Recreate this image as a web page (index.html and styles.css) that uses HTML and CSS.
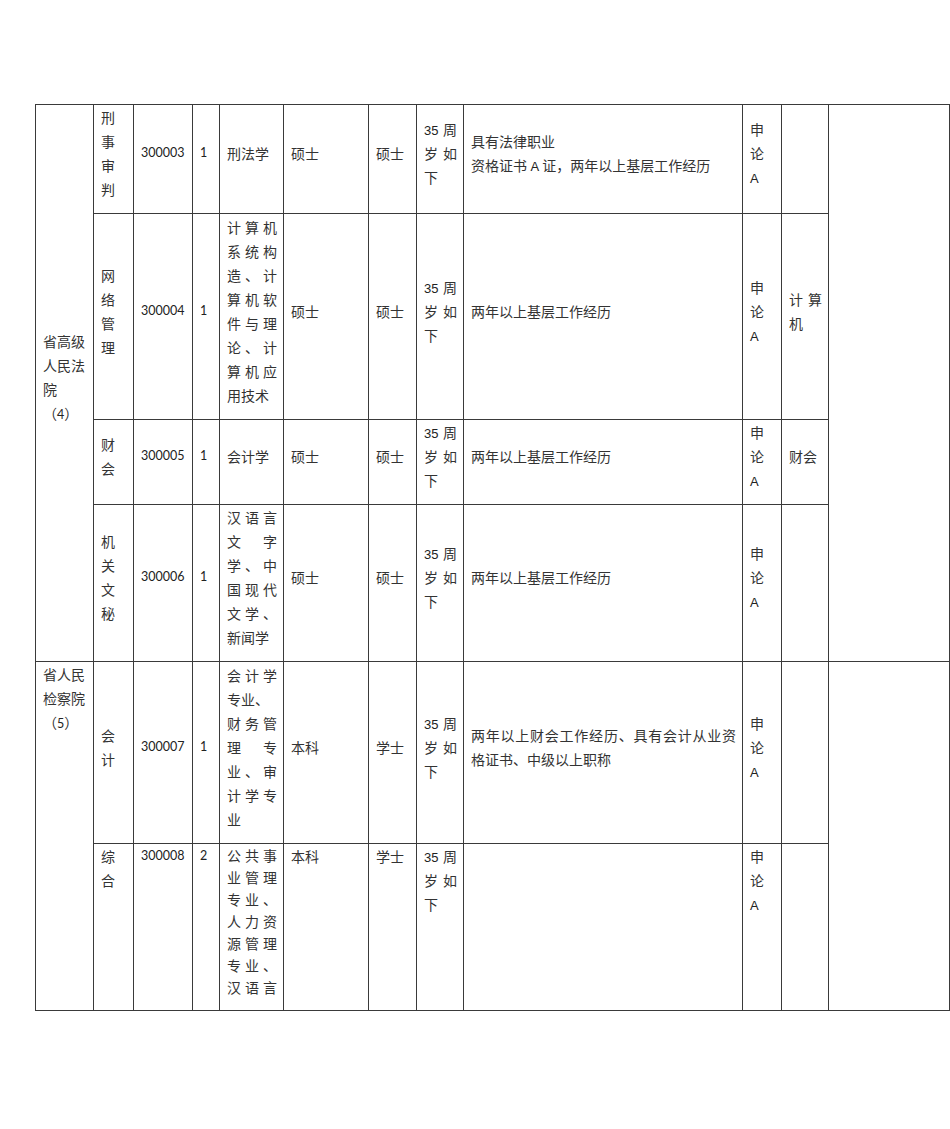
FILE: index.html
```html
<!DOCTYPE html>
<html lang="zh-CN">
<head>
<meta charset="utf-8">
<title>职位表</title>
<link rel="stylesheet" href="styles.css">
</head>
<body>
<table class="grid">
  <colgroup>
    <col class="c-unit"><col class="c-post"><col class="c-code"><col class="c-num"><col class="c-major">
    <col class="c-edu"><col class="c-deg"><col class="c-age"><col class="c-other"><col class="c-exam">
    <col class="c-prof"><col class="c-note">
  </colgroup>
  <tr class="r1">
    <td rowspan="4">省高级<br>人民法<br>院<br>（<span class="lato">4</span>）</td>
    <td class="top">刑<br>事<br>审<br>判</td>
    <td class="lato">300003</td>
    <td class="lato">1</td>
    <td>刑法学</td>
    <td>硕士</td>
    <td>硕士</td>
    <td><div class="j"><span class="arial">35</span><span>周</span></div><div class="j"><span>岁</span><span>如</span></div><div>下</div></td>
    <td>具有法律职业<br>资格证书<span class="arial"> A </span>证，两年以上基层工作经历</td>
    <td>申<br>论<br><span class="arial">A</span></td>
    <td></td>
    <td rowspan="4"></td>
  </tr>
  <tr class="r2">
    <td>网<br>络<br>管<br>理</td>
    <td class="lato">300004</td>
    <td class="lato">1</td>
    <td>
      <div class="j"><span>计</span><span>算</span><span>机</span></div>
      <div class="j"><span>系</span><span>统</span><span>构</span></div>
      <div class="j"><span>造</span><span>、</span><span>计</span></div>
      <div class="j"><span>算</span><span>机</span><span>软</span></div>
      <div class="j"><span>件</span><span>与</span><span>理</span></div>
      <div class="j"><span>论</span><span>、</span><span>计</span></div>
      <div class="j"><span>算</span><span>机</span><span>应</span></div>
      <div>用技术</div>
    </td>
    <td>硕士</td>
    <td>硕士</td>
    <td><div class="j"><span class="arial">35</span><span>周</span></div><div class="j"><span>岁</span><span>如</span></div><div>下</div></td>
    <td>两年以上基层工作经历</td>
    <td>申<br>论<br><span class="arial">A</span></td>
    <td><div class="j"><span>计</span><span>算</span></div><div>机</div></td>
  </tr>
  <tr class="r3">
    <td>财<br>会</td>
    <td class="lato">300005</td>
    <td class="lato">1</td>
    <td>会计学</td>
    <td>硕士</td>
    <td>硕士</td>
    <td><div class="j"><span class="arial">35</span><span>周</span></div><div class="j"><span>岁</span><span>如</span></div><div>下</div></td>
    <td>两年以上基层工作经历</td>
    <td>申<br>论<br><span class="arial">A</span></td>
    <td>财会</td>
  </tr>
  <tr class="r4">
    <td>机<br>关<br>文<br>秘</td>
    <td class="lato">300006</td>
    <td class="lato">1</td>
    <td>
      <div class="j"><span>汉</span><span>语</span><span>言</span></div>
      <div class="j"><span>文</span><span>字</span></div>
      <div class="j"><span>学</span><span>、</span><span>中</span></div>
      <div class="j"><span>国</span><span>现</span><span>代</span></div>
      <div class="j"><span>文</span><span>学</span><span>、</span></div>
      <div>新闻学</div>
    </td>
    <td>硕士</td>
    <td>硕士</td>
    <td><div class="j"><span class="arial">35</span><span>周</span></div><div class="j"><span>岁</span><span>如</span></div><div>下</div></td>
    <td>两年以上基层工作经历</td>
    <td>申<br>论<br><span class="arial">A</span></td>
    <td></td>
  </tr>
  <tr class="r5">
    <td rowspan="2" class="top">省人民<br>检察院<br>（<span class="lato">5</span>）</td>
    <td>会<br>计</td>
    <td class="lato">300007</td>
    <td class="lato">1</td>
    <td>
      <div class="j"><span>会</span><span>计</span><span>学</span></div>
      <div>专业、</div>
      <div class="j"><span>财</span><span>务</span><span>管</span></div>
      <div class="j"><span>理</span><span>专</span></div>
      <div class="j"><span>业</span><span>、</span><span>审</span></div>
      <div class="j"><span>计</span><span>学</span><span>专</span></div>
      <div>业</div>
    </td>
    <td>本科</td>
    <td>学士</td>
    <td><div class="j"><span class="arial">35</span><span>周</span></div><div class="j"><span>岁</span><span>如</span></div><div>下</div></td>
    <td><div class="jl">两年以上财会工作经历、具有会计从业资</div><div>格证书、中级以上职称</div></td>
    <td>申<br>论<br><span class="arial">A</span></td>
    <td></td>
    <td rowspan="2"></td>
  </tr>
  <tr class="r6">
    <td class="top">综<br>合</td>
    <td class="top lato">300008</td>
    <td class="top lato">2</td>
    <td class="top tight">
      <div class="j"><span>公</span><span>共</span><span>事</span></div>
      <div class="j"><span>业</span><span>管</span><span>理</span></div>
      <div class="j"><span>专</span><span>业</span><span>、</span></div>
      <div class="j"><span>人</span><span>力</span><span>资</span></div>
      <div class="j"><span>源</span><span>管</span><span>理</span></div>
      <div class="j"><span>专</span><span>业</span><span>、</span></div>
      <div class="j"><span>汉</span><span>语</span><span>言</span></div>
    </td>
    <td class="top">本科</td>
    <td class="top">学士</td>
    <td class="top"><div class="j"><span class="arial">35</span><span>周</span></div><div class="j"><span>岁</span><span>如</span></div><div>下</div></td>
    <td class="top"></td>
    <td class="top">申<br>论<br><span class="arial">A</span></td>
    <td class="top"></td>
  </tr>
</table>
</body>
</html>
```

FILE: styles.css
```css
html, body {
  margin: 0;
  padding: 0;
  background: #ffffff;
}

.grid {
  margin: 104px 0 0 35px;
  width: 914px;
  table-layout: fixed;
  border-collapse: collapse;
  font-family: "Noto Sans CJK SC", sans-serif;
  font-size: 14px;
  line-height: 24px;
  color: #333333;
}

.c-unit { width: 58px; }
.c-post { width: 40px; }
.c-code { width: 59px; }
.c-num { width: 27px; }
.c-major { width: 64px; }
.c-edu { width: 85px; }
.c-deg { width: 48px; }
.c-age { width: 47px; }
.c-other { width: 279px; }
.c-exam { width: 39px; }
.c-prof { width: 47px; }
.c-note { width: 121px; }

.grid td {
  border: 1px solid #3a3a3a;
  padding: 0 6px 12px 7px;
  vertical-align: middle;
  text-align: left;
  overflow: hidden;
}

.grid td.top {
  vertical-align: top;
}

.r1 { height: 109px; }
.r2 { height: 206px; }
.r3 { height: 85px; }
.r4 { height: 157px; }
.r5 { height: 182px; }
.r6 { height: 165px; }

.lato {
  font-family: Lato, "Noto Sans CJK SC", sans-serif;
  font-size: 12.5px;
  color: #222222;
  white-space: nowrap;
}

span.lato {
  line-height: 14px;
}

.arial {
  font-family: "Liberation Sans", Arial, sans-serif;
  font-size: 13px;
  line-height: 14px;
  color: #222222;
}

.j {
  display: flex;
  justify-content: space-between;
  align-items: baseline;
}

.jl {
  text-align: justify;
  text-align-last: justify;
}

.grid td.tight {
  line-height: 22px;
}
```
